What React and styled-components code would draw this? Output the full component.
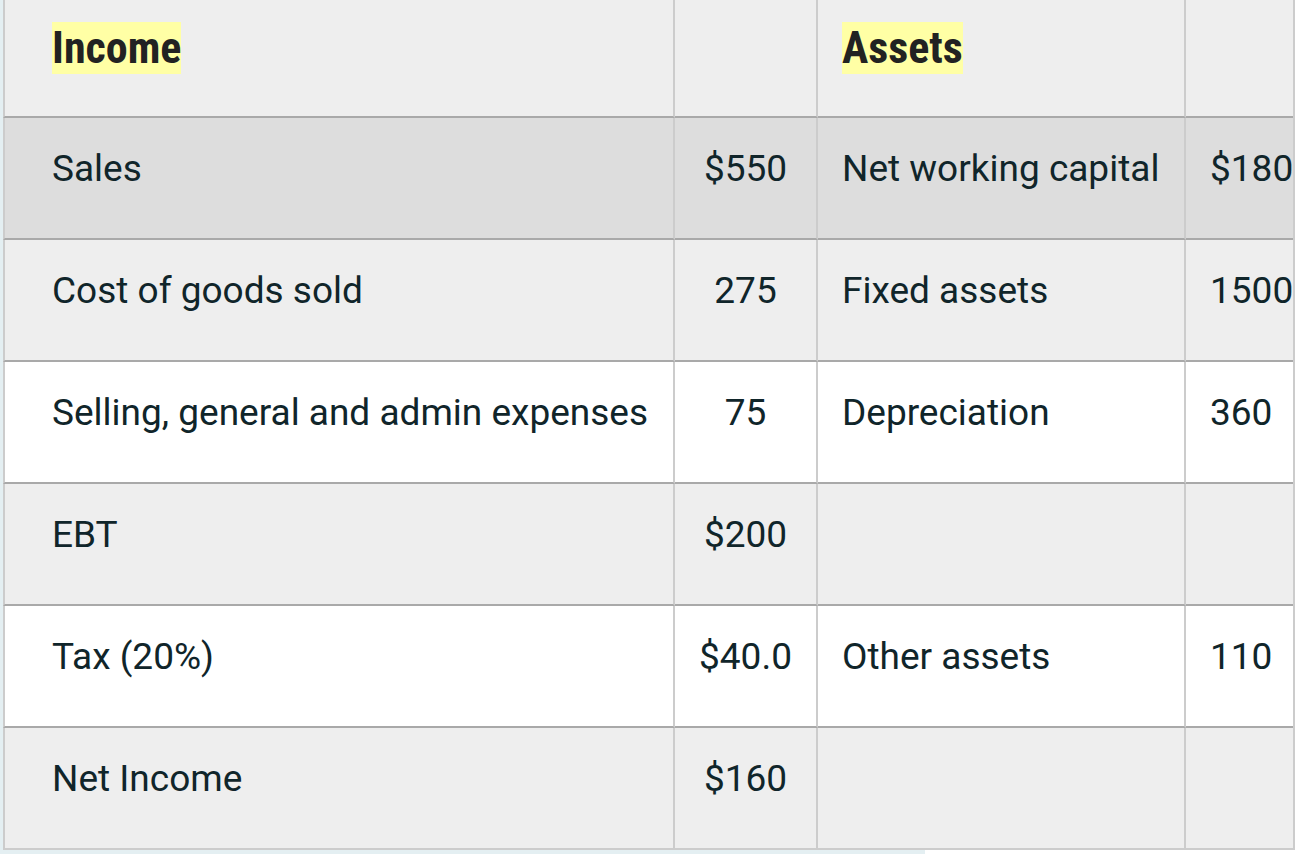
import React from "react";
import styled, { createGlobalStyle } from "styled-components";

const GlobalStyle = createGlobalStyle`
  html, body {
    margin: 0;
    padding: 0;
    background: #ffffff;
  }
  body {
    font-family: Roboto, "Liberation Sans", sans-serif;
    overflow: hidden;
  }
`;

const rows = [
  { bg: "#dddddd", cells: ["Sales", "$550", "Net working capital", "$180"] },
  { bg: "#eeeeee", cells: ["Cost of goods sold", "275", "Fixed assets", "1500"] },
  { bg: "#ffffff", cells: ["Selling, general and admin expenses", "75", "Depreciation", "360"] },
  { bg: "#eeeeee", cells: ["EBT", "$200", "", ""] },
  { bg: "#ffffff", cells: ["Tax (20%)", "$40.0", "Other assets", "110"] },
  { bg: "#eeeeee", cells: ["Net Income", "$160", "", ""] },
];

export default function App() {
  return (
    <>
      <GlobalStyle />
      <Frame>
        <Clip>
          <Table>
            <colgroup>
              <col style={{ width: 672 }} />
              <col style={{ width: 143 }} />
              <col style={{ width: 368 }} />
              <col style={{ width: 140 }} />
            </colgroup>
            <thead>
              <Row $bg="#eeeeee">
                <HeadCell $first>
                  <Mark>Income</Mark>
                </HeadCell>
                <HeadCell />
                <HeadCell>
                  <Mark>Assets</Mark>
                </HeadCell>
                <HeadCell />
              </Row>
            </thead>
            <tbody>
              {rows.map((r, i) => (
                <Row key={i} $bg={r.bg} $last={i === rows.length - 1}>
                  <Cell $first>{r.cells[0]}</Cell>
                  <Cell $center>{r.cells[1]}</Cell>
                  <Cell>{r.cells[2]}</Cell>
                  <Cell>{r.cells[3]}</Cell>
                </Row>
              ))}
            </tbody>
          </Table>
        </Clip>
      </Frame>
    </>
  );
}

const Frame = styled.div`
  width: 922px;
  padding-left: 3px;
  padding-bottom: 4px;
  background: #e4eff2;
`;

const Clip = styled.div`
  width: 1290px;
  overflow: hidden;
  border-right: 2px solid #cccccc;
  background: #ffffff;
`;

const Table = styled.table`
  table-layout: fixed;
  border-collapse: separate;
  border-spacing: 0;
  width: 1323px;
  color: #10252a;
  font-family: Roboto, "Liberation Sans", sans-serif;
`;

const Row = styled.tr`
  background: ${(p) => p.$bg};

  & > td,
  & > th {
    border-bottom: 2px solid ${(p) => (p.$last ? "#cccccc" : "#a9a9a9")};
  }
`;

const Cell = styled.td`
  box-sizing: border-box;
  height: 122px;
  vertical-align: top;
  padding: 25px 24px 0 ${(p) => (p.$first ? "47px" : "24px")};
  font-size: 37px;
  line-height: 52px;
  font-weight: 400;
  text-align: ${(p) => (p.$center ? "center" : "left")};
  white-space: nowrap;
  border-right: 2px solid #cccccc;
  border-left: ${(p) => (p.$first ? "2px solid #cccccc" : "none")};
`;

const HeadCell = styled.th`
  box-sizing: border-box;
  height: 118px;
  vertical-align: top;
  padding: 22px 24px 0 ${(p) => (p.$first ? "47px" : "24px")};
  text-align: left;
  font-weight: 700;
  white-space: nowrap;
  border-right: 2px solid #cccccc;
  border-left: ${(p) => (p.$first ? "2px solid #cccccc" : "none")};
`;

const Mark = styled.mark`
  display: inline-block;
  background: #ffffa5;
  color: #222222;
  font-family: "Roboto Condensed", Roboto, sans-serif;
  font-stretch: condensed;
  font-size: 44px;
  line-height: 52px;
  font-weight: 700;
`;
